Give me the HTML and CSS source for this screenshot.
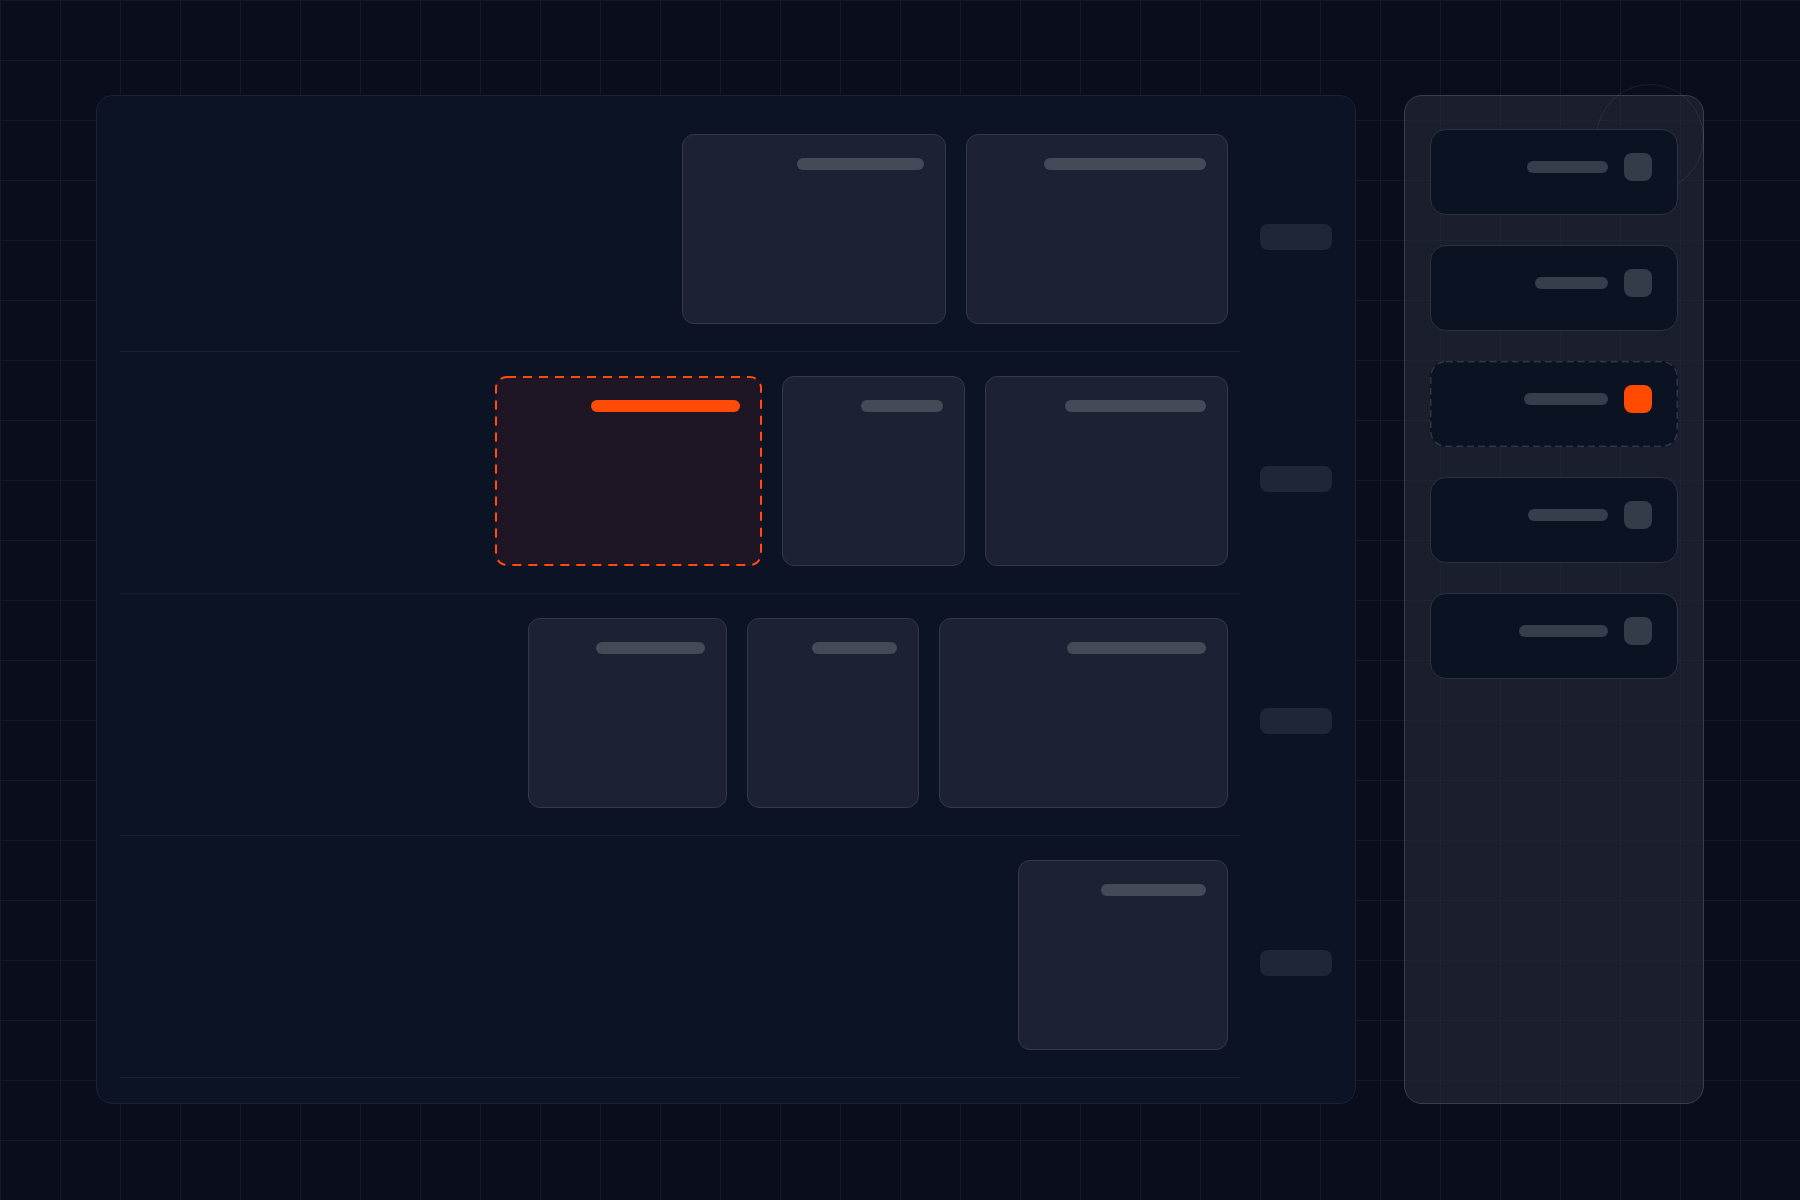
FILE: index.html
```html
<!DOCTYPE html>
<html lang="en">
<head>
<meta charset="utf-8">
<title>Timeline board</title>
<link rel="stylesheet" href="styles.css">
</head>
<body>
<div class="stage">
  <section class="board">
    <div class="row">
      <div class="lane">
        <div class="card" style="width:264px"><span class="bar" style="width:127px"></span></div>
        <div class="card" style="width:262px"><span class="bar" style="width:162px"></span></div>
      </div>
      <div class="pill"></div>
    </div>
    <div class="row">
      <div class="lane">
        <div class="card card-ghost" style="width:267px">
          <svg class="dash" width="100%" height="100%" preserveAspectRatio="none"><rect x="1" y="1" width="265" height="188" rx="11" ry="11" fill="none" stroke="#ff4d0d" stroke-width="2" stroke-dasharray="9 7"/></svg>
          <span class="bar bar-hot" style="width:149px"></span>
        </div>
        <div class="card" style="width:183px"><span class="bar" style="width:82px"></span></div>
        <div class="card" style="width:243px"><span class="bar" style="width:141px"></span></div>
      </div>
      <div class="pill"></div>
    </div>
    <div class="row">
      <div class="lane">
        <div class="card" style="width:199px"><span class="bar" style="width:109px"></span></div>
        <div class="card" style="width:172px"><span class="bar" style="width:85px"></span></div>
        <div class="card" style="width:289px"><span class="bar" style="width:139px"></span></div>
      </div>
      <div class="pill"></div>
    </div>
    <div class="row">
      <div class="lane">
        <div class="card" style="width:210px"><span class="bar" style="width:105px"></span></div>
      </div>
      <div class="pill"></div>
    </div>
  </section>

  <aside class="tray">
    <div class="halo"></div>
    <div class="item"><span class="line" style="width:81px"></span><span class="chip"></span></div>
    <div class="item"><span class="line" style="width:73px"></span><span class="chip"></span></div>
    <div class="item item-ghost">
      <svg class="dash" width="100%" height="100%"><rect x="0.75" y="0.75" width="246.5" height="84.5" rx="15" ry="15" fill="none" stroke="#2f3646" stroke-width="1.5" stroke-dasharray="7 4"/></svg>
      <span class="line" style="width:84px"></span><span class="chip chip-hot"></span>
    </div>
    <div class="item"><span class="line" style="width:80px"></span><span class="chip"></span></div>
    <div class="item"><span class="line" style="width:89px"></span><span class="chip"></span></div>
  </aside>
</div>
</body>
</html>
```

FILE: styles.css
```css
* { box-sizing: border-box; }

html, body {
  margin: 0;
  width: 1800px;
  height: 1200px;
  overflow: hidden;
}

body {
  font-family: "Inter", "Liberation Sans", sans-serif;
  background-color: #0a0e1c;
  background-image:
    linear-gradient(to right, #131928 1px, transparent 1px),
    linear-gradient(to bottom, #131928 1px, transparent 1px);
  background-size: 60px 60px;
}

.stage {
  display: flex;
  align-items: flex-start;
  gap: 48px;
  padding: 95px 0 0 96px;
}

/* main board */
.board {
  width: 1260px;
  height: 1009px;
  background: #0c1324;
  border: 1px solid #1a2233;
  border-radius: 16px;
  padding: 14px 23px 24px 23px;
  display: flex;
  flex-direction: column;
}

.row {
  display: flex;
}

.lane {
  flex: 1;
  display: flex;
  justify-content: flex-end;
  gap: 20px;
  padding: 24px 12px 27px 0;
  border-bottom: 1px solid #172233;
}

.card {
  position: relative;
  height: 190px;
  background: #1c2233;
  border: 1px solid #323949;
  border-radius: 12px;
  display: flex;
  justify-content: flex-end;
  align-items: flex-start;
  padding: 23px 21px;
}

.card-ghost {
  background: #1e1624;
  border: none;
  padding: 24px 22px;
}

.dash {
  position: absolute;
  left: 0;
  top: 0;
  pointer-events: none;
}

.bar {
  position: relative;
  display: block;
  height: 12px;
  border-radius: 6px;
  background: #444a58;
}

.bar-hot {
  background: #ff4a08;
}

.pill {
  width: 72px;
  height: 26px;
  margin-left: 20px;
  margin-top: 12px;
  align-self: center;
  border-radius: 8px;
  background: #1f2637;
}

/* right tray */
.tray {
  position: relative;
  width: 300px;
  height: 1009px;
  background: rgba(38, 42, 56, 0.62);
  border: 1px solid #3a3f4c;
  border-radius: 18px;
  padding: 33px 25px;
  display: flex;
  flex-direction: column;
  gap: 30px;
}

.halo {
  position: absolute;
  left: 191px;
  top: -12px;
  width: 108px;
  height: 108px;
  border-radius: 50%;
  border: 1px solid rgba(255, 255, 255, 0.07);
}

.item {
  position: relative;
  z-index: 1;
  width: 248px;
  height: 86px;
  background: #0b1222;
  border: 1px solid #2b3242;
  border-radius: 16px;
  display: flex;
  justify-content: flex-end;
  align-items: flex-start;
  gap: 16px;
  padding: 23px 25px;
}

.item-ghost {
  border: none;
  padding: 24px 26px;
}

.line {
  position: relative;
  display: block;
  height: 12px;
  margin-top: 8px;
  border-radius: 6px;
  background: #363d4b;
}

.chip {
  position: relative;
  display: block;
  width: 28px;
  height: 28px;
  border-radius: 8px;
  background: #343b49;
}

.chip-hot {
  background: #ff4a00;
}
```
